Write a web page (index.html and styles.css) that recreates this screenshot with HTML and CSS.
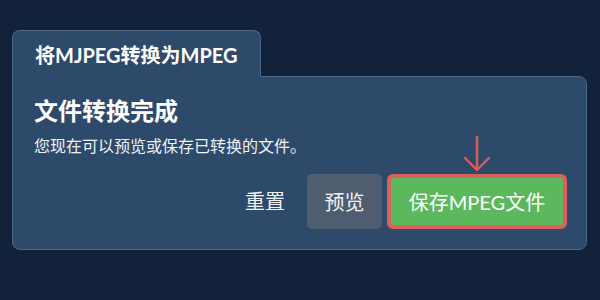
FILE: index.html
```html
<!DOCTYPE html>
<html lang="zh">

<head>
	<meta charset="UTF-8">
	<meta name="viewport" content="width=device-width, initial-scale=1.0">
	<title>将MJPEG转换为MPEG</title>
	<link rel="stylesheet" href="styles.css">
</head>

<body>
	<div class="converter">
		<div class="tab">将MJPEG转换为MPEG</div>
		<div class="panel">
			<h2>文件转换完成</h2>
			<p class="note">您现在可以预览或保存已转换的文件。</p>
			<div class="actions">
				<button class="btn btn-link">重置</button>
				<button class="btn btn-gray">预览</button>
				<div class="save-wrap">
					<svg class="hint-arrow" width="28" height="36" viewBox="0 0 28 36">
						<path d="M14 1 V34 M2 22 L14 34 L26 22" fill="none" stroke="#df5b5b" stroke-width="2.4" stroke-linecap="round" stroke-linejoin="round"/>
					</svg>
					<button class="btn btn-save">保存MPEG文件</button>
				</div>
			</div>
		</div>
	</div>
</body>

</html>
```

FILE: styles.css
```css
	body {
		margin: 0;
		background-color: #12223a;
		font-family: "Lato", "Noto Sans CJK SC", sans-serif;
		color: #ffffff;
	}

	.converter {
		padding: 30px 13px 0 12px;
		display: flex;
		flex-direction: column;
		align-items: flex-start;
	}

	.tab {
		position: relative;
		z-index: 1;
		background-color: #2d4a6b;
		border: 1px solid #4d6789;
		border-bottom: none;
		border-radius: 8px 8px 0 0;
		padding: 3px 22px 1px 22px;
		line-height: 42px;
		font-size: 20px;
		font-weight: bold;
		margin-bottom: -1px;
	}

	.panel {
		align-self: stretch;
		background-color: #2d4a6b;
		border: 1px solid #4d6789;
		border-radius: 0 8px 8px 8px;
		padding: 19px 19px 20px 21px;
	}

	.panel h2 {
		margin: 0;
		font-size: 24px;
		line-height: 30px;
		font-weight: bold;
	}

	.note {
		margin: 8px 0 0 0;
		font-size: 16px;
		line-height: 24px;
		color: #f0f2f5;
	}

	.actions {
		margin-top: 16px;
		display: flex;
		justify-content: flex-end;
		gap: 5px;
	}

	.btn {
		font-family: inherit;
		font-size: 20px;
		height: 55px;
		padding: 0 17px;
		border: none;
		border-radius: 5px;
		color: #f2f2f2;
		cursor: pointer;
	}

	.btn-link {
		background: transparent;
		padding-bottom: 3px;
	}

	.btn-gray {
		background-color: #4e5e70;
		width: 75px;
	}

	.save-wrap {
		position: relative;
	}

	.btn-save {
		background-color: #5cb85c;
		border: 4px solid #dc5f5c;
		border-radius: 6px;
		padding: 0 10px;
		color: #ffffff;
		width: 180px;
	}

	.hint-arrow {
		position: absolute;
		left: 50%;
		bottom: 100%;
		margin-left: -14px;
		margin-bottom: 2px;
	}
```
